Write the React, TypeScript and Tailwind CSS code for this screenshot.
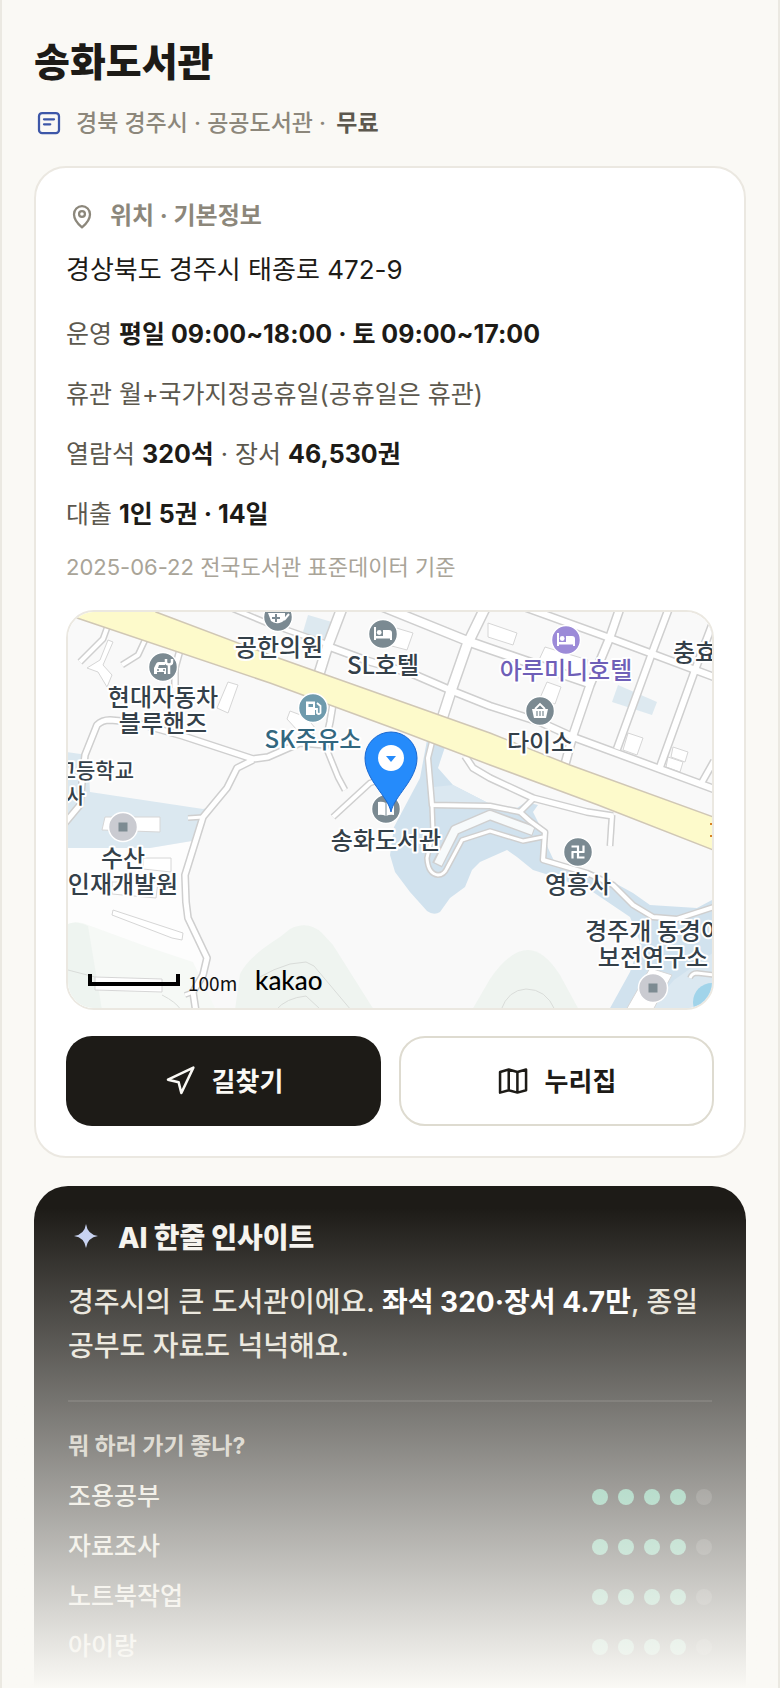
import type { ReactNode } from 'react'
import { Navigation } from 'lucide-react'

const ratings = [
  { label: '조용공부', score: 4 },
  { label: '자료조사', score: 4 },
  { label: '노트북작업', score: 4 },
  { label: '아이랑', score: 4 },
]

// [path, road width]
const roads: [string, number][] = [
  ['M39 16 35 27 12 50', 4],
  ['M77 28 70 43 54 53', 4],
  ['M112 38 107 56 107 76', 5],
  ['M-3 211 12 193 15 160 17 143 29 113Q34 108 42 108L65 110 115 124 185 147 200 145 232 131 257 133 262 110 265 92', 5],
  ['M257 133 270 165 277 178', 4],
  ['M185 148 169 156 159 176 135 205 117 263 118 290 120 306 139 346 135 363 125 380 128 400', 5],
  ['M120 206 135 205', 3],
  ['M117 383 125 380', 3],
  ['M265 205 302 171 318 166', 4],
  ['M163 -4 199 11 262 33', 4],
  ['M274 -4 260 33 251 62', 9],
  ['M308 -8 402 30 422 37 524 72', 8],
  ['M262 35 300 49 345 62 382 78 422 94 472 110 505 125 646 177', 6],
  ['M417 -4 399 33 384 76 374 107', 9],
  ['M456 -5 539 25 582 41 646 65', 6],
  ['M552 -4 542 25 522 73 505 123 496 156', 7],
  ['M601 -4 584 41 549 137', 6],
  ['M646 8 627 58 592 155', 6],
  ['M646 149 633 172', 5],
  ['M364 130 360 146 364 193 422 194 452 200', 4],
  ['M397 144 405 156 422 166 465 186 519 200 545 204', 5],
  ['M452 200 465 187', 4],
  ['M452 200 462 209 477 220 475 248 519 261 545 273 565 293 585 305 609 307 646 295', 4],
  ['M364 193 365 220 359 246Q360 262 370 263 376 263 379 256L394 228 422 219 455 229 475 225', 3],
  ['M544 203 542 234', 4],
  ['M622 366Q624 361 629 361L646 363', 3],
]

const buildings = [
  '40,28 45,30 35,53 44,63 39,75 30,60 19,56 32,48',
  '160,70 170,73 160,101 149,96',
  '325,15 345,21 339,38 320,33',
  '420,11 449,21 445,33 420,25',
  '477,35 520,48 515,65 470,50',
  '479,70 493,75 487,92 472,86',
  '560,121 575,126 569,143 555,138',
  '605,135 620,140 617,150 603,145',
  '600,145 615,150 612,160 598,155',
  '219,107 222,99 238,105 248,117 240,130',
  '37,205 92,205 92,220 34,218',
  '75,246 103,246 103,260 75,257',
  '44,270 90,270 88,286 44,282',
  '45,298 115,321 114,328 104,326 44,303',
  '27,365 94,367 94,380 27,378',
  '582,356 604,363 585,398 558,398',
]

function Poi({ x, y, color = '#7b8a92', children }: { x: number; y: number; color?: string; children: ReactNode }) {
  return (
    <g transform={`translate(${x} ${y})`}>
      <circle r="14.5" fill={color} stroke="#fff" strokeWidth="1.5" />
      {children}
    </g>
  )
}

function PlainPoi({ x, y }: { x: number; y: number }) {
  return (
    <Poi x={x} y={y} color="#cacbd1">
      <rect x="-4.5" y="-4.5" width="9" height="9" fill="#7d8b92" />
    </Poi>
  )
}

function Bed() {
  return (
    <g fill="#fff">
      <path d="M-9-7h2V2H9V6H7V4.500H-7V6h-2z" />
      <circle cx="-3.800" cy="-1.500" r="2.400" />
      <path d="M0-4h6a3 3 0 0 1 3 3v3H0z" />
    </g>
  )
}

function LibraryMap() {
  return (
    <svg
      viewBox="0 0 644 396"
      preserveAspectRatio="xMidYMid slice"
      role="img"
      aria-label="송화도서관"
      className="block h-full w-full font-['Noto_Sans_CJK_KR',sans-serif]"
    >
      <rect width="644" height="396" fill="#f9f9f9" />

      {/* hills and lots */}
      <path d="M-2 236H82L124 229 117 263 118 290 139 346 130 380 150 398H-2z" fill="#fdfdfd" />
      <path d="M0 312Q10 308 20 313L80 335 125 350 148 398H0z" fill="#f6f9f6" />
      <path d="M0 312Q8 308 20 314L34 398H0z" fill="#eef4f0" />
      <path d="M167 398 172 362Q180 345 212 325L222 317Q240 308 254 321L265 333 306 398z" fill="#eff4f0" />
      <path d="M404 398 422 367Q442 338 460 338 476 338 492 363L511 398z" fill="#eff4f0" />
      <g fill="none" stroke="#d9dcd9">
        <path d="M0 358 27 365M94 383Q108 390 113 398" />
        <path d="M192 365Q205 357 222 352L238 350 246 354 283 398M208 398Q218 386 238 384L252 397" />
        <path d="M433 398Q440 378 458 377 478 377 487 398" />
      </g>

      {/* water and public lots */}
      <path d="M-2 140 20 143 22 180 135 197 145 194 124 229 82 236H-2z" fill="#dbe8f0" />
      <path d="M240 3 264 10 257 28 235 20z" fill="#dde9f0" />
      <path d="M550 73 589 90 584 103 544 90z" fill="#dde9f0" />
      <path
        d="M359 128 352 166 335 198 326 215 322 243 327 260 342 280 359 299Q366 304 372 300L382 286 397 275 404 258 412 250 439 238 449 245 465 258 484 264 522 278 562 305 572 330 562 360 541 398H646V287L629 296 582 293 565 281 545 270 519 261 487 251 480 236 475 220 465 200 470 193 458 190 449 196 422 192 385 173 370 156 377 135z"
        fill="#d1e2ee"
      />
      <path d="M366 175 385 173 422 192H364zM580 398 606 368 646 340V398z" fill="#dbe8f1" />
      <circle cx="644" cy="390" r="19" fill="#a1d4ea" />

      <g fill="#fff" stroke="#d6d6d6">
        {buildings.map((points) => (
          <polygon key={points} points={points} />
        ))}
      </g>

      <g fill="none" strokeLinejoin="round">
        <path d="M369 253 387 218 422 203 466 219" stroke="#cfcfcf" strokeWidth="11" />
        <path d="M370 252 387 218 422 203 465 219" stroke="#f7fafb" strokeWidth="8" />
        {roads.map(([d, w]) => (
          <path key={d} d={d} stroke="#cfcfcf" strokeWidth={w + 3} />
        ))}
        {roads.map(([d, w]) => (
          <path key={d} d={d} stroke="#fff" strokeWidth={w} />
        ))}
      </g>

      {/* main road */}
      <path
        d="M-4-8H80L88 0 202 43 422 121 502 153 648 206V239L530 193 422 153 330 118 202 71 9 6-4 2z"
        fill="#fdfacb"
        stroke="#d0c7b5"
        strokeWidth="1.500"
      />
      <path d="M643 211v2M643 223v2" stroke="#d98324" strokeWidth="2" />

      {/* places */}
      <Poi x={210} y={5}>
        <path d="M-10-4H7V1A8 6 0 0 1-7 4z" fill="#fff" />
        <path d="M-2-3V5M-6 1H2" stroke="#7b8a92" strokeWidth="2" />
        <path d="M6 3 11-3" stroke="#fff" strokeWidth="2" />
      </Poi>
      <Poi x={95} y={55}>
        <path d="M-9 7V1l2-4a3 3 0 0 1 3-2H2v3H-4L-5 1H3V7H1V5H-6V7z" fill="#fff" />
        <path d="M-6 3h2M0 3h2" stroke="#7b8a92" strokeWidth="1.500" />
        <path d="M6 7V-2M3-8v3q0 2.500 3 2.500T9-5V-8" fill="none" stroke="#fff" strokeWidth="2.500" />
      </Poi>
      <Poi x={315} y={22}>
        <Bed />
      </Poi>
      <Poi x={498} y={28} color="#9c8bd8">
        <Bed />
      </Poi>
      <Poi x={245} y={96} color="#6f9bad">
        <path d="M-7-6.500H2V7H-7z" fill="#fff" />
        <path d="M-4.500-4H0V-1H-4.500z" fill="#6f9bad" />
        <path d="M2 1H4V5Q6 7 7.500 5V-2L4-5" fill="none" stroke="#fff" strokeWidth="1.800" />
      </Poi>
      <Poi x={472} y={99}>
        <path d="M-8-2H8L6 7H-6z" fill="#fff" />
        <path d="M-5-2 0-7 5-2" fill="none" stroke="#fff" strokeWidth="1.800" />
        <path d="M-3 0V5M0 0V5M3 0V5" stroke="#7b8a92" strokeWidth="1.200" />
      </Poi>
      <Poi x={318} y={197}>
        <path d="M-8-7q4-1 8 1 4-2 8-1V6Q4 5 0 7-4 5-8 6z" fill="#fff" />
        <path d="M0-6V7" stroke="#7b8a92" />
      </Poi>
      <Poi x={510} y={240}>
        <path d="M0-6.500V6.500M-6.500 0H6.500M-6.500-5.500H0M5.500-6.500V0M0 5.500H6.500M-5.500 0V6.500" fill="none" stroke="#fff" strokeWidth="2.200" />
      </Poi>
      <PlainPoi x={55} y={215} />
      <PlainPoi x={585} y={376} />

      <g
        fontSize="24"
        fontWeight="500"
        textAnchor="middle"
        fill="#344049"
        stroke="#fff"
        strokeWidth="4"
        strokeLinejoin="round"
        paintOrder="stroke"
      >
        <text x="211" y="44">공한의원</text>
        <text x="315" y="62">SL호텔</text>
        <text x="498" y="67" fill="#6f5fb8">아루미니호텔</text>
        <text x="605" y="49" textAnchor="start">충효</text>
        <text x="95" y="94">현대자동차</text>
        <text x="95" y="120">블루핸즈</text>
        <text x="245" y="136" fill="#32677f">SK주유소</text>
        <text x="472" y="139">다이소</text>
        <text x="66" y="166" fontSize="21" textAnchor="end">고등학교</text>
        <text x="17" y="191" fontSize="21" textAnchor="end">사</text>
        <text x="55" y="255">수산</text>
        <text x="55" y="281">인재개발원</text>
        <text x="318" y="237">송화도서관</text>
        <text x="510" y="281">영흥사</text>
        <text x="517" y="328" textAnchor="start">경주개 동경이</text>
        <text x="585" y="354">보전연구소</text>
      </g>

      {/* library marker */}
      <path
        d="M323 200C320 184 297 168 297 146a26 26 0 0 1 52 0c0 22-23 38-26 54z"
        fill="#258bfb"
        stroke="#1b68cf"
      />
      <circle cx="323" cy="146" r="13" fill="#fff" />
      <path d="M318 144h10l-5 6z" fill="#258bfb" />

      {/* scale */}
      <path d="M22 362v10h88v-10" fill="none" stroke="#000" strokeWidth="4" />
      <text x="120" y="379" fontSize="19" fill="#111">100m</text>
      <text x="187" y="378" fontSize="26" fontWeight="500" fill="#000" className="font-[Lato,sans-serif]">kakao</text>
    </svg>
  )
}

function InfoCard() {
  return (
    <section className="mt-7 rounded-[32px] border-2 border-[#ebe8e1] bg-white px-[30px] pt-8 pb-[30px]">
      <h2 className="flex items-center gap-3 text-[24px] leading-8 font-bold text-[#8c877b]">
        <svg className="size-8" viewBox="0 0 24 24" fill="none" stroke="currentColor" strokeWidth="1.7" strokeLinejoin="round">
          <path d="M12 20.500C9.500 18.400 6 14.800 6 10.600a6 6 0 0 1 12 0c0 4.200-3.500 7.800-6 9.900z" />
          <circle cx="12" cy="10.500" r="2.200" />
        </svg>
        위치 · 기본정보
      </h2>
      <address className="mt-5 text-[26px] leading-9 text-[#1d1b17] not-italic">경상북도 경주시 태종로 472-9</address>
      <div className="mt-7 flex flex-col gap-6 text-[25px] leading-9 text-[#5c584e] [&_strong]:font-bold [&_strong]:text-[#1d1b17]">
        <p>운영 <strong>평일 09:00~18:00 · 토 09:00~17:00</strong></p>
        <p>휴관 월+국가지정공휴일(공휴일은 휴관)</p>
        <p>열람석 <strong>320석</strong> · 장서 <strong>46,530권</strong></p>
        <p>대출 <strong>1인 5권 · 14일</strong></p>
      </div>
      <p className="mt-5 text-[22px] leading-[30px] text-[#a9a498]">2025-06-22 전국도서관 표준데이터 기준</p>

      <div className="mt-7 h-[400px] overflow-hidden rounded-[28px] border-2 border-[#ebe8e1]">
        <LibraryMap />
      </div>

      <div className="mt-[26px] grid grid-cols-2 gap-[18px] text-[26px] font-bold">
        <a href="#directions" className="flex h-[90px] items-center justify-center gap-4 rounded-[26px] bg-[#1d1b17] text-[#faf9f5]">
          <Navigation size={32} strokeWidth={1.9} />
          길찾기
        </a>
        <a href="#homepage" className="flex h-[90px] items-center justify-center gap-4 rounded-[26px] border-2 border-[#dedbd0] bg-white text-[#1d1b17]">
          <svg className="size-8" viewBox="0 0 24 24" fill="none" stroke="currentColor" strokeWidth="1.9" strokeLinejoin="round">
            <path d="M2.300 5.200 8.800 3.400l6.500 1.800 6.500-1.800v15.500l-6.500 1.800-6.500-1.800-6.500 1.800zM8.800 3.400v15.500M15.300 5.200v15.500" />
          </svg>
          누리집
        </a>
      </div>
    </section>
  )
}

function InsightCard() {
  return (
    <section className="mt-7 rounded-t-[34px] bg-[#1d1b17] px-[34px] pt-[34px] pb-4">
      <h2 className="flex items-center gap-[14px] text-[28px] leading-9 font-extrabold text-[#f5f3ee]">
        <svg className="size-9" viewBox="0 0 36 36" fill="#c5d0f0">
          <path d="M18 4q1.500 10.500 12 12-10.500 1.500-12 12-1.500-10.500-12-12 10.500-1.500 12-12z" />
        </svg>
        AI 한줄 인사이트
      </h2>
      <p className="mt-6 text-[28px] leading-[44px] font-medium text-[#e7e3d8]">
        경주시의 큰 도서관이에요. <strong className="font-bold text-white">좌석 320·장서 4.7만</strong>, 종일 공부도 자료도 넉넉해요.
      </p>
      <div className="mt-8 border-t-2 border-white/10 pt-7">
        <h3 className="text-[23px] leading-8 font-bold text-[#c5c0b4]">뭐 하러 가기 좋나?</h3>
        <ul className="mt-[10px]">
          {ratings.map((item) => (
            <li key={item.label} className="flex h-[50px] items-center justify-between text-[25px] font-medium text-[#e7e3d8]">
              <span>{item.label}</span>
              <span className="flex gap-[10px]">
                {[1, 2, 3, 4, 5].map((n) => (
                  <i key={n} className={n <= item.score ? 'size-4 rounded-full bg-[#5bb592]' : 'size-4 rounded-full bg-white/14'} />
                ))}
              </span>
            </li>
          ))}
        </ul>
      </div>
    </section>
  )
}

function App() {
  return (
    <main className="relative min-h-screen border-x-2 border-[#ebe9e2] bg-[#faf9f5] px-8 pt-9 font-[Inter,'Noto_Sans_CJK_KR',sans-serif]">
      <h1 className="text-[39px] leading-[52px] font-extrabold text-[#1d1b17]">송화도서관</h1>
      <p className="mt-5 flex items-center gap-3 text-[23px] leading-[30px] font-medium text-[#8c877b]">
        <svg className="size-[30px]" viewBox="0 0 24 24" fill="none" stroke="#3d57a8" strokeWidth="1.8" strokeLinecap="round">
          <rect x="4" y="4" width="16" height="16" rx="2.500" />
          <path d="M8 9h8M8 13h5" />
        </svg>
        <span>
          경북 경주시 · 공공도서관 · <strong className="ml-1 font-bold text-[#5c584e]">무료</strong>
        </span>
      </p>
      <InfoCard />
      <InsightCard />
      <div className="pointer-events-none absolute inset-x-0 bottom-0 h-[480px] bg-linear-to-b from-[#faf9f5]/0 to-[#faf9f5]" />
    </main>
  )
}

export default App
